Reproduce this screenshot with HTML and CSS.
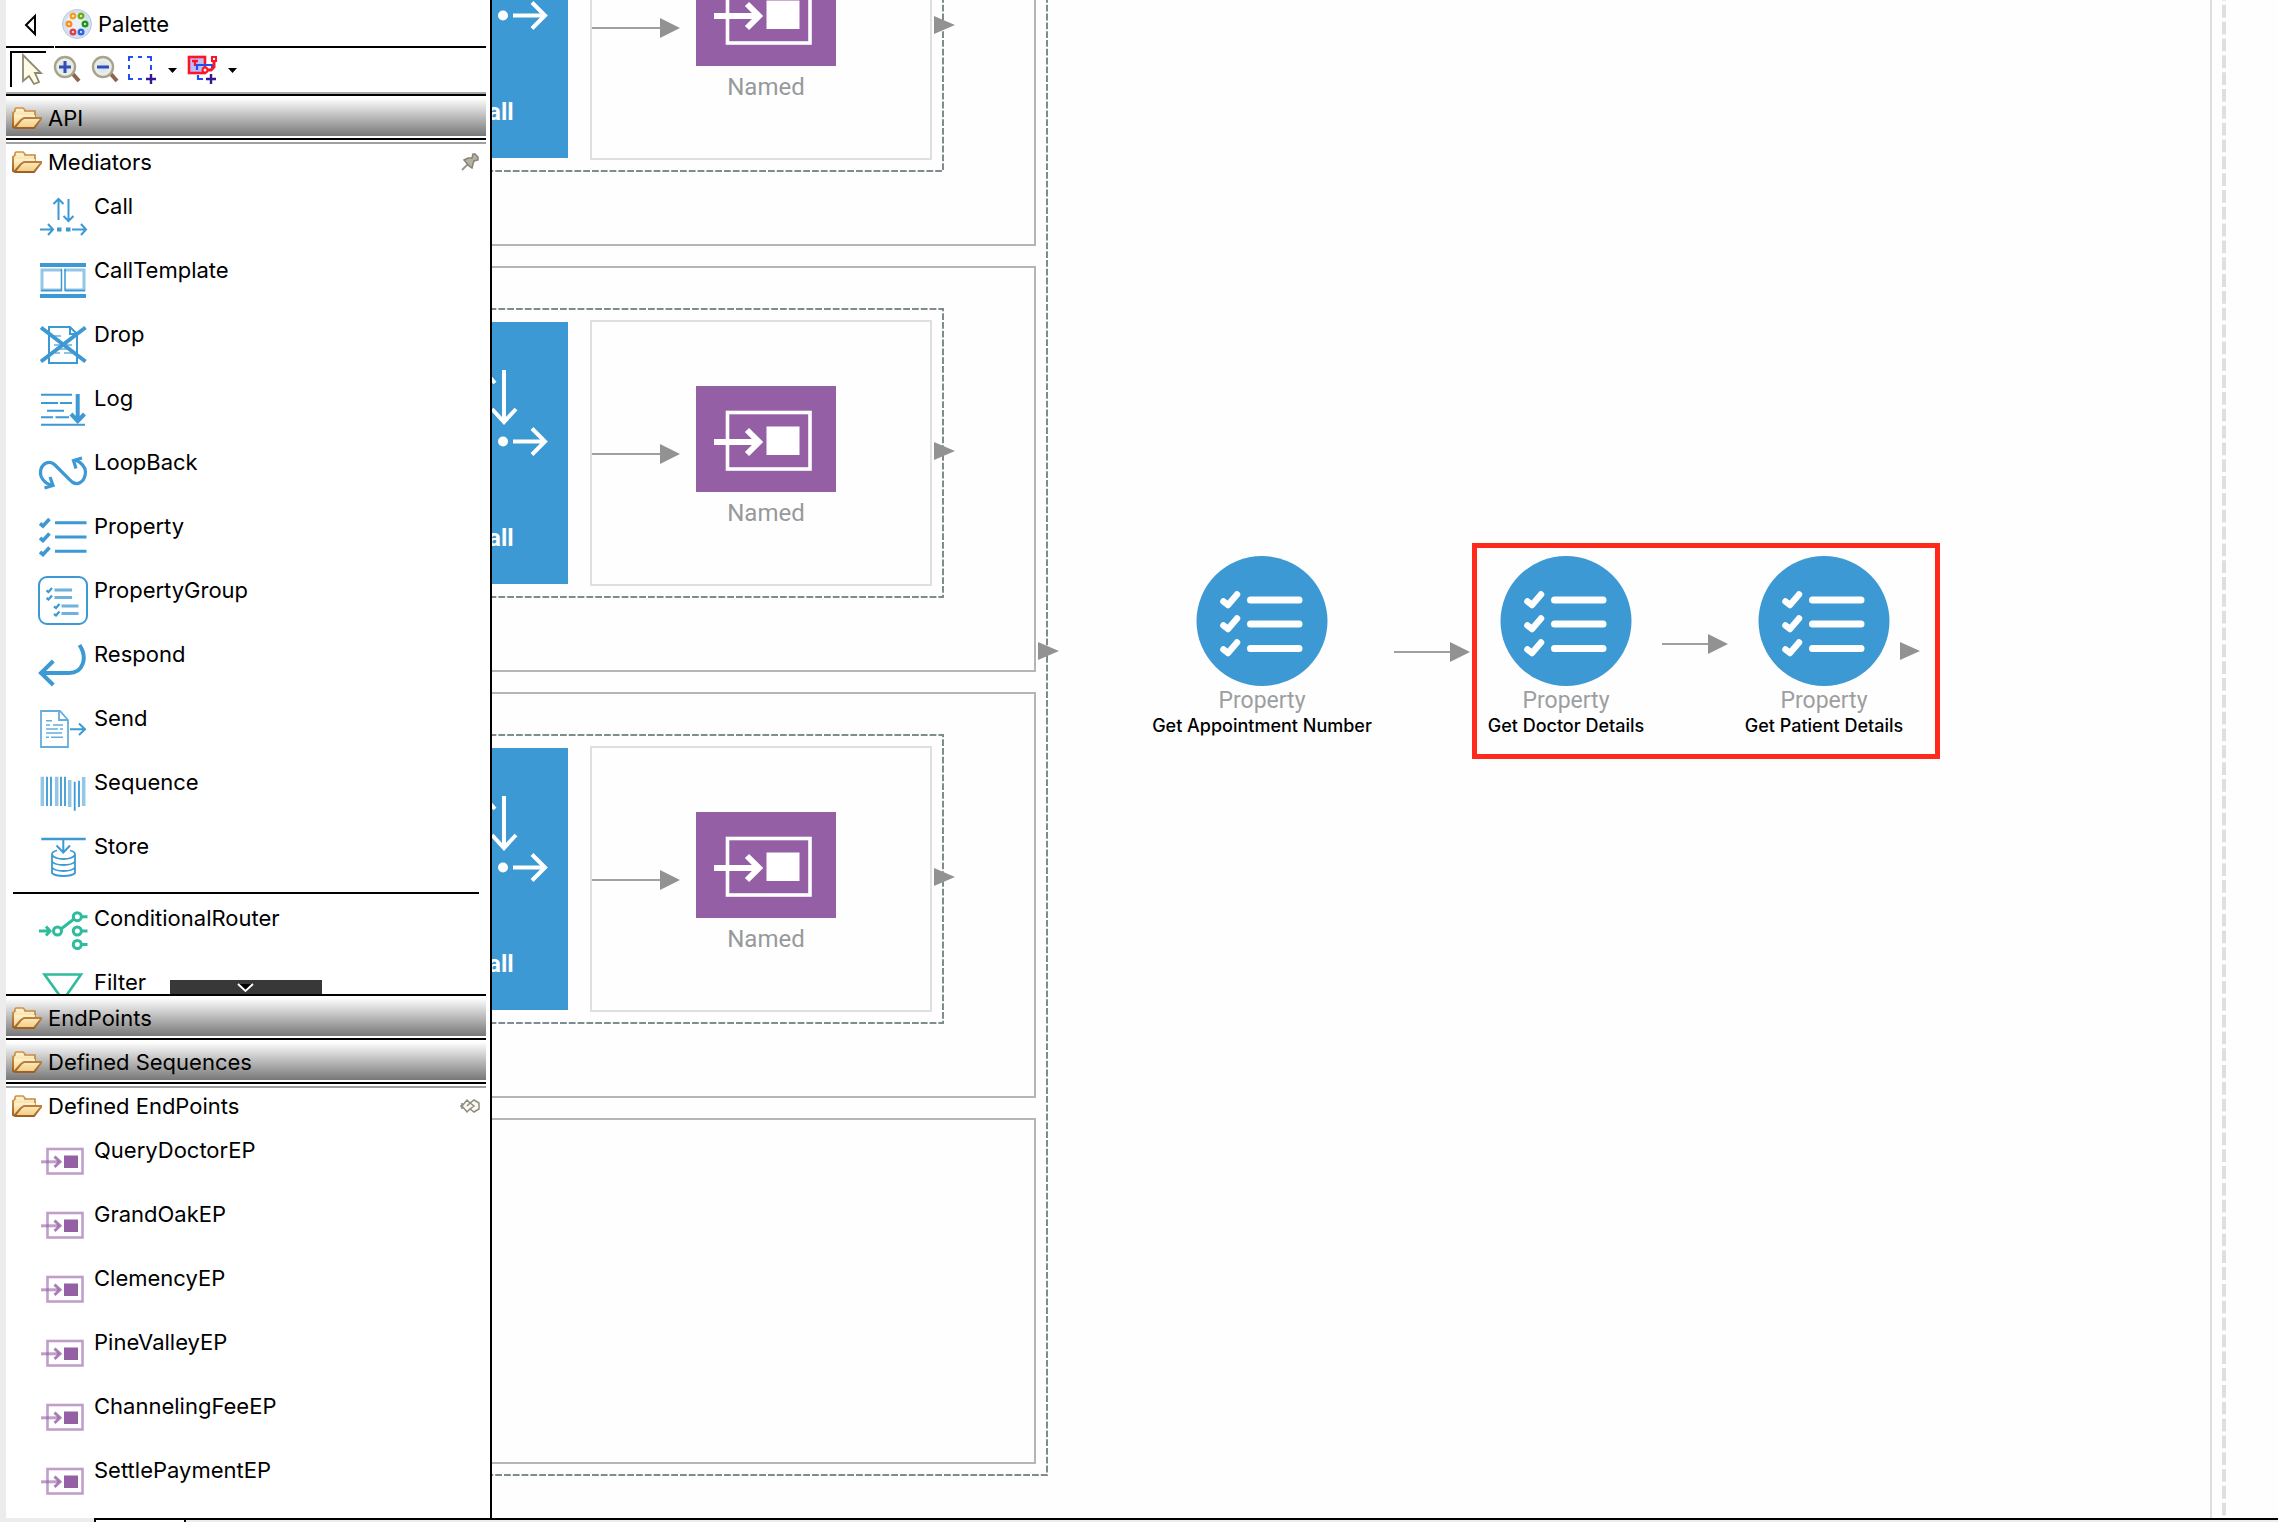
FILE: index.html
```html
<!DOCTYPE html>
<html lang="en">
<head>
<meta charset="utf-8">
<meta name="viewport" content="width=device-width, initial-scale=1">
<title>Sequence editor</title>
<link rel="stylesheet" href="styles.css">
</head>
<body>
<svg class="defs" aria-hidden="true">
  <defs>
    <linearGradient id="folder-fill" x1="0" y1="0" x2="0" y2="1"><stop offset="0" stop-color="#fdf3d0"/><stop offset="1" stop-color="#f3cc7e"/></linearGradient>
    <linearGradient id="folder-edge" x1="0" y1="0" x2="0" y2="1"><stop offset="0" stop-color="#cf9248"/><stop offset="1" stop-color="#9c6026"/></linearGradient>
    <radialGradient id="lens"><stop offset="0" stop-color="#cfe0f7"/><stop offset="1" stop-color="#f4f1e2"/></radialGradient>
  </defs>
  <symbol id="i-folder" viewBox="0 0 30 22">
    <path d="M1 19V6L3 4V2L4 1H11L13 3V4H23V10" fill="url(#folder-fill)" stroke="url(#folder-edge)" stroke-width="1.6"/>
    <path d="M1 21V8H23V11H29L22 21Z" fill="url(#folder-fill)"/>
    <path d="M1 5V20L3 21H22L29 12V11H12L9 13L3 20" fill="none" stroke="url(#folder-edge)" stroke-width="2"/>
  </symbol>
  <symbol id="i-call" viewBox="0 0 50 50">
    <g class="s" stroke-width="2"><path d="M20.500 28V7M15.500 12l5-5 5 5M30.500 7v21M25.500 24l5 5 5-5M2 37.500h13M10 32l5 5.500-5 5.500M34 37.500h14M43 32l5 5.500-5 5.500"/><path d="M19 37.500h4.500M28 37.500h4.500" stroke-width="4"/></g>
  </symbol>
  <symbol id="i-calltemplate" viewBox="0 0 50 50">
    <g class="s"><path d="M2 9h46" stroke-width="4"/><path d="M2 40h46" stroke-width="4"/><path d="M24 14H4V34H24M26 14H46V34H27" stroke-width="3" opacity=".55"/><path d="M23.500 13V35M27 13V35M3 34.500H24M27 34.500H47" stroke-width="1.500"/></g>
  </symbol>
  <symbol id="i-drop" viewBox="0 0 50 50">
    <g class="s"><path d="M11 7H32L39 14V43H11Z M32 7V14H39" stroke-width="2"/><path d="M15 16h8M16 25h18M17 33h5M26 33h8M19 29h14" stroke-width="2" opacity=".6"/><path d="M3 7.500L47.500 41.500M47.500 7.500L3 41.500" stroke-width="4"/></g>
  </symbol>
  <symbol id="i-log" viewBox="0 0 50 50">
    <g class="s"><path d="M3 10.700H34M3 19H20M22 19H34M9 26.700H26M3 33.300H15M17.500 33.300H31M3 40.700H47" stroke-width="2"/><path d="M39.700 10V36M33 30L39.700 37L46.500 30" stroke-width="4"/></g>
  </symbol>
  <symbol id="i-loopback" viewBox="0 0 50 50">
    <g class="s" stroke-width="3.200"><path d="M13 37C6 35 2 29 2.500 24C3 16 11 11 17 17L32 32C38 39 47 35 47.500 24C47.500 19 43 14 37 12"/><path d="M6.500 40L15 37.500L12 29M44 10L35.500 12.500L38 20.500"/></g>
  </symbol>
  <symbol id="i-property" viewBox="0 0 50 50">
    <g class="s" stroke-width="3"><path d="M17 10.700H48.500M17 25H48.500M17 39.300H48.500"/><path d="M2 11.500L5 14L11.500 7M2 26L5 28.500L11.500 21.500M2 40L5 42.500L11.500 35.500" stroke-width="3.600"/></g>
  </symbol>
  <symbol id="i-propertygroup" viewBox="0 0 50 50">
    <g class="s"><rect x="1" y="1" width="48" height="47" rx="8" stroke-width="2"/><path d="M16.500 14H34M16.500 21.500H34M23.500 30H40.500M23.500 37.500H40.500" stroke-width="3" opacity=".75"/><path d="M8.500 14.500L10.500 16L14 12M8.500 22L10.500 23.500L14 19.500M16 30.500L18 32L21.500 28M16 38L18 39.500L21.500 35.500" stroke-width="2.200"/></g>
  </symbol>
  <symbol id="i-respond" viewBox="0 0 50 50">
    <path class="s" stroke-width="4" d="M41.500 5C50 18 45 33 31 33H3M15.300 21L3 33L15.300 45"/>
  </symbol>
  <symbol id="i-send" viewBox="0 0 50 50">
    <g class="s"><path d="M3 7H22L30 16V43H3Z M21 7V16H30" stroke-width="1.800" opacity=".8"/><path d="M8 16.700h6M8 21h4M15 21h10M8 25h12M22 25h3M8 29h16M8 33.300h3M13 33.300h12" stroke-width="1.600" opacity=".8"/><path d="M32 25.300H47M41 19.500L47 25.300L41 31" stroke-width="2"/></g>
  </symbol>
  <symbol id="i-sequence" viewBox="0 0 50 50">
    <g class="s"><path d="M4.300 8.700V38M18.700 8.700V38M45.700 9V38M31.700 12V39" stroke-width="3.500" opacity=".55"/><path d="M9 8.700V38M13 8.700V38M23 8.700V38M27 8.700V38M36.700 13.700V42.700M41 12.700V39" stroke-width="1.800"/></g>
  </symbol>
  <symbol id="i-store" viewBox="0 0 50 50">
    <g class="s"><path d="M3.300 7H47.700" stroke-width="2.600"/><path d="M25.300 7V20M18.500 13.500L25.300 20.500L32 13.500" stroke-width="2"/><path d="M19 18.500C15 19.500 14 20.500 14 22V41Q17 44 25.500 44T37 41V22C37 20.500 36 19.500 32 18.500M14 23Q17 27 25.500 27T37 23M14 29.500Q17 33 25.500 33T37 29.500M14 35.500Q17 39 25.500 39T37 35.500" stroke-width="1.800"/></g>
  </symbol>
  <symbol id="i-router" viewBox="0 0 50 50">
    <g class="s" stroke-width="3"><path d="M1 27H11M8 22.500L12 27L8 31.500M23 25L36 15M43.500 12.700H49.500M43.500 27H49.500M43.500 40.500H49.500"/><circle cx="19.500" cy="27" r="4"/><circle cx="39.300" cy="12.700" r="4"/><circle cx="39.300" cy="27" r="4"/><circle cx="39.300" cy="40.500" r="4"/></g>
  </symbol>
  <symbol id="i-filter" viewBox="0 0 50 50">
    <path class="s" stroke-width="2.600" d="M6.500 6.500H43L28 28V44L22 40V28Z"/>
  </symbol>
  <symbol id="i-endpoint" viewBox="0 0 50 50">
    <g class="s"><rect x="9.500" y="13" width="35" height="24.500" stroke-width="2.600" opacity=".6"/><path d="M3 25.800H21" stroke-width="3" opacity=".6"/><path d="M16.500 20.500L22 25.800L16.500 31" stroke-width="3" opacity=".8"/></g><rect class="f" x="26" y="19.500" width="14" height="12.500"/>
  </symbol>
  <symbol id="i-named" viewBox="0 0 140 106">
    <rect x="31.500" y="26.500" width="82.500" height="56.500" fill="none" stroke="#fff" stroke-width="3.600"/>
    <path d="M18 56H62M51 44L63 56L51 68" fill="none" stroke="#fff" stroke-width="6"/><rect x="70.500" y="40.500" width="33" height="28.500" fill="#fff"/>
  </symbol>
  <symbol id="i-call-large" viewBox="0 0 150 150">
    <g fill="none" stroke="#fff" stroke-width="4"><path d="M65 100V48M53 61L65 48L77 61M86 48V99M74 87L86 100L98 87M20 119.500H50M37 106.500L50 119.500L37 132.500M95 119.500H127M114 106.500L127 119.500L114 132.500"/></g>
    <circle cx="65" cy="119.500" r="5" fill="#fff"/><circle cx="85" cy="119.500" r="5" fill="#fff"/>
  </symbol>
  <symbol id="i-property-large" viewBox="0 0 132 130">
    <ellipse cx="66" cy="65" rx="65.500" ry="65" fill="#3d99d3"/>
    <g fill="none" stroke="#fff" stroke-linecap="round" stroke-width="7"><path d="M54.500 44H103M54.500 68H103M54.500 92.500H103"/><path d="M27.500 45.500L32 49L41 38.500M27.500 69.500L32 73L41 62.500M27.500 93.500L32 97L41 86.500" stroke-width="6.500" stroke-linejoin="round"/></g>
  </symbol>
</svg>

<div class="workbench">
  <aside class="palette" aria-label="Palette">
    <header class="palette-head">
      <button class="collapse" aria-label="Hide palette"><svg width="14" height="26" viewBox="0 0 14 26"><path d="M12 4V22L3 13Z" fill="#fff" stroke="#000" stroke-width="2"/></svg></button>
      <h1 class="palette-title">
        <svg width="30" height="30" viewBox="0 0 30 30"><circle cx="15" cy="15" r="14.500" fill="#d5e0f0" stroke="#b6c8e2"/><circle cx="14" cy="14" r="10" fill="#eaf1fa"/><g stroke-width="2.400" fill="#fff6"><circle cx="11" cy="7" r="2.300" stroke="#f4a21c"/><circle cx="19" cy="7" r="2.300" stroke="#6fae18"/><circle cx="7" cy="15" r="2.300" stroke="#f7901e"/><circle cx="23" cy="15" r="2.300" stroke="#1d9a1b"/><circle cx="11" cy="23" r="2.300" stroke="#e04050"/><circle cx="19" cy="23" r="2.300" stroke="#2968dd"/></g></svg>
        <span>Palette</span>
      </h1>
    </header>
    <div class="toolbar" role="toolbar" aria-label="Tools">
      <button class="tool tool-active" aria-label="Select"><svg width="34" height="34" viewBox="0 2 34 34"><path d="M11 4V30L17 25L22 33L27 31L23 22H29Z" fill="#fffbe4" stroke="#8c8872" stroke-width="1.800"/></svg></button>
      <button class="tool" aria-label="Zoom in"><svg width="30" height="32" viewBox="0 0 30 32"><path d="M20 20L27 28" stroke="#8d6450" stroke-width="4"/><circle cx="13" cy="14" r="10" fill="url(#lens)" stroke="#a8a38c" stroke-width="2.400"/><path d="M7 14H19M13 8V20" stroke="#2f4fb4" stroke-width="3"/></svg></button>
      <button class="tool" aria-label="Zoom out"><svg width="32" height="32" viewBox="0 0 32 32"><path d="M22 20L29 28" stroke="#8d6450" stroke-width="4"/><circle cx="15" cy="14" r="10" fill="url(#lens)" stroke="#a8a38c" stroke-width="2.400"/><path d="M9 14H21" stroke="#2f4fb4" stroke-width="3"/></svg></button>
      <button class="tool" aria-label="Marquee"><svg width="32" height="32" viewBox="0 0 32 32"><g fill="none" stroke="#2050f5" stroke-width="2"><path d="M3 8V4H7M12 4H16M21 4H25V8M3 12V16M25 12V17M3 21V26H7M12 26H16"/></g><path d="M20 26H30M25 21V31" stroke="#34188e" stroke-width="2.400"/></svg></button>
      <button class="tool" aria-label="Marquee options"><svg width="16" height="16" viewBox="0 0 16 16"><path d="M4 7H13L8.500 12Z"/></svg></button>
      <button class="tool" aria-label="Connections"><svg width="32" height="32" viewBox="0 0 32 32"><rect x="3" y="4" width="16" height="16" fill="#bcc0fa" stroke="#fb1526" stroke-width="2.600"/><path d="M6 8H12M9 8V13" stroke="#fb1526" stroke-width="2.400"/><path d="M11 17V12H26V17M12 22V26H17" fill="none" stroke="#2050f5" stroke-width="2.200"/><path d="M20 17H25L28 14V9" fill="none" stroke="#fb1526" stroke-width="3"/><rect x="26" y="4" width="4" height="4" fill="#fff" stroke="#fb1526" stroke-width="2"/><circle cx="19" cy="17" r="2.500" fill="#fff" stroke="#fb1526" stroke-width="2"/><path d="M20 26H30M25 21V31" stroke="#34188e" stroke-width="2.400"/></svg></button>
      <button class="tool" aria-label="Connection options"><svg width="16" height="16" viewBox="0 0 16 16"><path d="M4 7H13L8.500 12Z"/></svg></button>
    </div>

    <section class="drawer"><button class="drawer-head closed"><svg class="folder"><use href="#i-folder"/></svg>API</button></section>

    <section class="drawer drawer-open drawer-grow">
      <button class="drawer-head"><svg class="folder"><use href="#i-folder"/></svg>Mediators
        <svg class="pin" width="20" height="20" viewBox="0 0 20 20"><path d="M2 18L9 11" stroke="#96958a" stroke-width="1.800"/><path d="M4 8L8 6L12 6L13 2H15L18 5V8L14 9L13 12L12 16L9 14Z" fill="#b5b1a0" stroke="#86847a" stroke-width="1.500"/></svg>
      </button>
      <div class="entries blue">
        <button class="entry"><svg><use href="#i-call"/></svg><span>Call</span></button>
        <button class="entry"><svg><use href="#i-calltemplate"/></svg><span>CallTemplate</span></button>
        <button class="entry"><svg><use href="#i-drop"/></svg><span>Drop</span></button>
        <button class="entry"><svg><use href="#i-log"/></svg><span>Log</span></button>
        <button class="entry"><svg><use href="#i-loopback"/></svg><span>LoopBack</span></button>
        <button class="entry"><svg><use href="#i-property"/></svg><span>Property</span></button>
        <button class="entry"><svg><use href="#i-propertygroup"/></svg><span>PropertyGroup</span></button>
        <button class="entry"><svg><use href="#i-respond"/></svg><span>Respond</span></button>
        <button class="entry"><svg><use href="#i-send"/></svg><span>Send</span></button>
        <button class="entry"><svg><use href="#i-sequence"/></svg><span>Sequence</span></button>
        <button class="entry"><svg><use href="#i-store"/></svg><span>Store</span></button>
      </div>
      <hr class="divider">
      <div class="entries green">
        <button class="entry"><svg><use href="#i-router"/></svg><span>ConditionalRouter</span></button>
        <button class="entry"><svg><use href="#i-filter"/></svg><span>Filter</span></button>
      </div>
      <button class="scroll-down" aria-label="Scroll down"><svg width="18" height="10" viewBox="0 0 18 10"><path d="M1 1H17L9 9Z" fill="#000"/><path d="M1 1L8.500 8L16 1" fill="none" stroke="#fff" stroke-width="2"/></svg></button>
    </section>

    <section class="drawer"><button class="drawer-head closed"><svg class="folder"><use href="#i-folder"/></svg>EndPoints</button></section>
    <section class="drawer"><button class="drawer-head closed"><svg class="folder"><use href="#i-folder"/></svg>Defined Sequences</button></section>

    <section class="drawer drawer-open">
      <button class="drawer-head"><svg class="folder"><use href="#i-folder"/></svg>Defined EndPoints
        <svg class="pin" width="20" height="20" viewBox="0 0 20 20"><path d="M0 10H6M2 7V13" stroke="#8f8d80" stroke-width="1.600"/><path d="M2 10L7 4L10 7L14 4L19 7V13L14 16L10 13L7 16ZM7 10L10 7L14 10L10 13" fill="#fbfaf2" stroke="#8f8d80" stroke-width="1.500"/></svg>
      </button>
      <div class="entries purple">
        <button class="entry"><svg><use href="#i-endpoint"/></svg><span>QueryDoctorEP</span></button>
        <button class="entry"><svg><use href="#i-endpoint"/></svg><span>GrandOakEP</span></button>
        <button class="entry"><svg><use href="#i-endpoint"/></svg><span>ClemencyEP</span></button>
        <button class="entry"><svg><use href="#i-endpoint"/></svg><span>PineValleyEP</span></button>
        <button class="entry"><svg><use href="#i-endpoint"/></svg><span>ChannelingFeeEP</span></button>
        <button class="entry"><svg><use href="#i-endpoint"/></svg><span>SettlePaymentEP</span></button>
      </div>
    </section>
  </aside>

  <main class="canvas">
    <div class="case case-1">
      <div class="call-block"><svg><use href="#i-call-large"/></svg><span>Call</span></div>
      <div class="endpoint-area"><div class="named"><svg><use href="#i-named"/></svg><span>Named</span></div></div>
    </div>
    <div class="case case-2">
      <div class="call-block"><svg><use href="#i-call-large"/></svg><span>Call</span></div>
      <div class="endpoint-area"><div class="named"><svg><use href="#i-named"/></svg><span>Named</span></div></div>
    </div>
    <div class="case case-3">
      <div class="call-block"><svg><use href="#i-call-large"/></svg><span>Call</span></div>
      <div class="endpoint-area"><div class="named"><svg><use href="#i-named"/></svg><span>Named</span></div></div>
    </div>
    <div class="case case-4"></div>

    <div class="mediator m-appointment"><svg><use href="#i-property-large"/></svg><span class="kind">Property</span><span class="name">Get Appointment Number</span></div>
    <div class="mediator m-doctor"><svg><use href="#i-property-large"/></svg><span class="kind">Property</span><span class="name">Get Doctor Details</span></div>
    <div class="mediator m-patient"><svg><use href="#i-property-large"/></svg><span class="kind">Property</span><span class="name">Get Patient Details</span></div>
    <div class="highlight"></div>

    <svg class="wires" aria-hidden="true">
      <g fill="none" stroke="#7f8c8d" stroke-width="2" stroke-dasharray="6.800 2">
        <path d="M555 -4V1475H-20"/>
        <path d="M451 -4V171H-20"/>
        <path d="M-20 309H451V597H-20"/>
        <path d="M-20 735H451V1023H-20"/>
      </g>
      <g stroke="#a0a0a0" stroke-width="2"><path d="M100 28H170M100 454H170M100 880H170M902 652H960M1170 644H1218"/></g>
      <g fill="#929292">
        <path d="M168 18L188 28L168 38ZM168 444L188 454L168 464ZM168 870L188 880L168 890ZM958 642L978 652L958 662ZM1216 634L1236 644L1216 654Z"/>
        <path d="M442 16L463 25L442 34ZM442 442L463 451L442 460ZM442 868L463 877L442 886ZM546 642L567 651L546 660ZM1408 642L1428 651L1408 660Z"/>
      </g>
    </svg>
    <svg class="page-edge" width="20" aria-hidden="true"><path d="M1 0V3000" stroke="#dfdfdf" stroke-width="2"/><path d="M14 -12V3000" stroke="#dfdfdf" stroke-width="4" stroke-dasharray="12.830 4"/></svg>
  </main>
</div>
<footer class="tabs"><span class="tab"></span><span class="tab-rest"></span></footer>
</body>
</html>
```
FILE: styles.css
```css
* { box-sizing: border-box; }

body {
  margin: 0;
  min-height: 100vh;
  display: flex;
  flex-direction: column;
  background: #ececec;
  color: #000;
  font-family: Inter, "Liberation Sans", sans-serif;
  font-size: 22px;
}

button {
  margin: 0;
  padding: 0;
  border: 0;
  background: none;
  color: inherit;
  font: inherit;
  text-align: left;
}

svg { display: block; flex: none; }
.defs { position: absolute; width: 0; height: 0; }
.s { fill: none; stroke: currentColor; }
.f { fill: currentColor; }

.workbench { flex: 1; display: flex; min-height: 0; }

/* Palette */
.palette {
  flex: none;
  width: 492px;
  display: flex;
  flex-direction: column;
  padding-right: 4px;
  border-left: 6px solid #ececec;
  border-right: 2px solid #000;
  background: #fff;
}
.palette-head { display: flex; gap: 1px; height: 48px; }
.collapse {
  display: flex;
  align-items: center;
  width: 48px;
  padding: 3px 0 0 17px;
  border-bottom: 2px solid #000;
}
.palette-title {
  flex: 1;
  display: flex;
  align-items: center;
  gap: 6px;
  margin: 0;
  padding: 2px 0 0 7px;
  border-bottom: 2px solid #000;
  font-size: 22px;
  font-weight: 400;
}
.toolbar {
  display: flex;
  align-items: center;
  gap: 6px;
  height: 48px;
  padding: 0 0 4px 4px;
  border-bottom: 2px solid #000;
  box-shadow: inset 0 -2px #a9a9a9;
}
.tool-active { width: 36px; border-top: 2px solid #000; border-left: 2px solid #000; }

/* Drawers */
.drawer { border-bottom: 2px solid #000; }
.drawer-head {
  display: flex;
  align-items: center;
  gap: 6px;
  width: 100%;
  height: 44px;
  padding: 0 6px;
}
.drawer-head.closed {
  height: 40px;
  margin-bottom: 2px;
  padding-top: 4px;
  background: linear-gradient(#fff 5%, #777);
}
.folder { width: 30px; height: 22px; }
.pin { margin-left: auto; }
.drawer-open { border-bottom: 0; padding-bottom: 6px; }
.drawer-open .drawer-head { background: linear-gradient(#a0a0a0, #a0a0a0) 0 2px / 100% 2px no-repeat; }
.drawer-grow {
  position: relative;
  flex: 1 1 0;
  min-height: 0;
  padding-bottom: 0;
  overflow: hidden;
  border-bottom: 2px solid #000;
}
.entry {
  display: flex;
  gap: 6px;
  width: 100%;
  height: 64px;
  padding: 8px 0 0 32px;
  line-height: 28px;
}
.entry svg { width: 50px; height: 50px; }
.blue svg { color: #3d99d3; }
.green svg { color: #2ebc9c; }
.purple svg { color: #945fa5; }
.divider {
  height: 2px;
  margin: 4px 7px 2px;
  border: 0;
  background: #000;
}
.scroll-down {
  position: absolute;
  bottom: 0;
  left: 164px;
  display: flex;
  justify-content: center;
  width: 152px;
  height: 14px;
  padding-top: 3px;
  background: #383838;
}

/* Diagram canvas */
.canvas {
  position: relative;
  flex: 1;
  min-width: 0;
  min-height: 1518px;
  overflow: hidden;
  background: #fefefe;
  font-family: Roboto, "Liberation Sans", sans-serif;
  font-size: 24px;
  line-height: 28px;
}
.case {
  position: absolute;
  left: -160px;
  width: 704px;
  height: 406px;
  border: 2px solid #b5b5b5;
}
.case-1 { top: -160px; }
.case-2 { top: 266px; }
.case-3 { top: 692px; }
.case-4 { top: 1118px; height: 346px; }
.call-block {
  position: absolute;
  top: 54px;
  left: 84px;
  width: 150px;
  height: 262px;
  display: flex;
  flex-direction: column;
  align-items: center;
  gap: 52px;
  background: #3d99d3;
  color: #fff;
  font-weight: 700;
}
.call-block svg { width: 150px; height: 150px; }
.endpoint-area {
  position: absolute;
  top: 52px;
  left: 256px;
  width: 342px;
  height: 266px;
  padding: 64px 0 0 104px;
  border: 2px solid #dfdfdf;
}
.named {
  display: flex;
  flex-direction: column;
  align-items: center;
  gap: 7px;
  width: 140px;
  color: #97999b;
}
.named svg { width: 140px; height: 106px; background: #945fa5; }

.mediator {
  position: absolute;
  top: 556px;
  width: 240px;
  display: flex;
  flex-direction: column;
  align-items: center;
}
.mediator svg { width: 132px; height: 130px; }
.m-appointment { left: 650px; }
.m-doctor { left: 954px; }
.m-patient { left: 1212px; }
.kind { color: #9c9ea0; font-size: 23px; line-height: 29px; }
.name {
  font-family: Inter, "Liberation Sans", sans-serif;
  font-size: 18px;
  font-weight: 500;
  line-height: 22px;
  white-space: nowrap;
}
.highlight {
  position: absolute;
  top: 543px;
  left: 980px;
  width: 468px;
  height: 216px;
  border: 5px solid #ff2a1c;
}
.wires { position: absolute; inset: 0; width: 100%; height: 100%; }
.page-edge { position: absolute; top: 0; right: 48px; height: 100%; }

/* Editor tabs */
.tabs { flex: none; display: flex; height: 4px; padding-left: 94px; }
.tab { width: 92px; border: solid #000; border-width: 2px 2px 0; background: #fff; }
.tab-rest { flex: 1; border-top: 2px solid #000; }
```
